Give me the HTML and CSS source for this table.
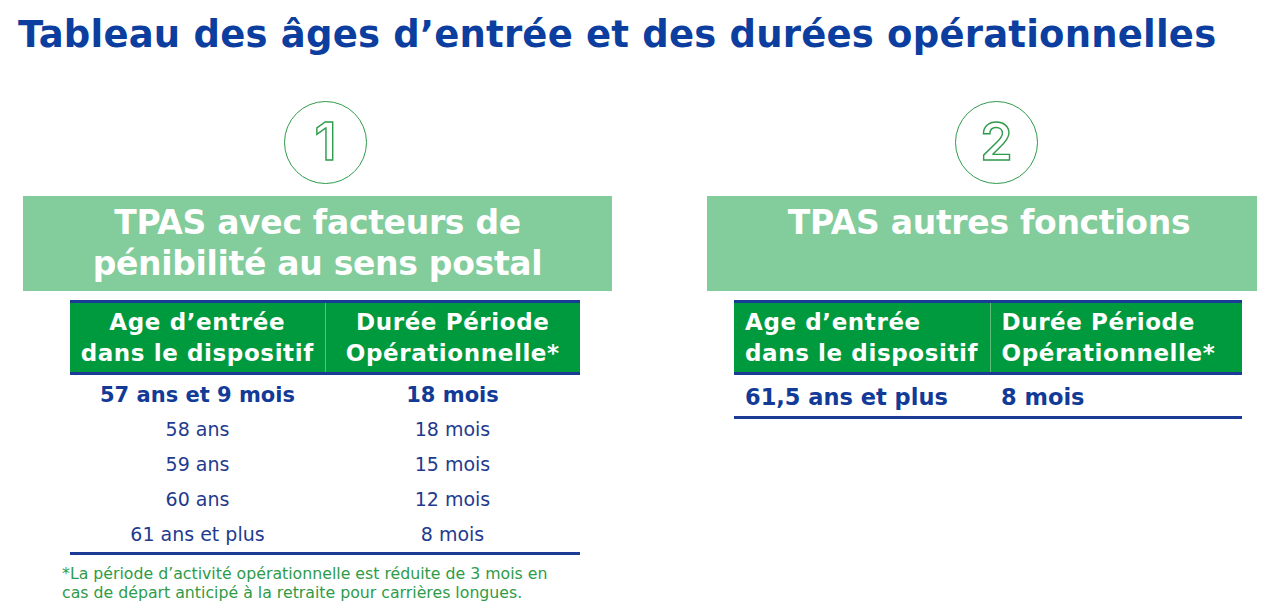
FILE: index.html
```html
<!DOCTYPE html>
<html lang="fr">
<head>
<meta charset="utf-8">
<title>Tableau des âges d’entrée</title>
<link rel="stylesheet" href="styles.css">
</head>
<body>
<h1 class="title">Tableau des âges d’entrée et des durées opérationnelles</h1>
<main class="cols">
  <section class="col col-left">
    <div class="badge-wrap badge-left"><div class="badge"><span class="badge-num">1</span></div></div>
    <div class="banner banner-left">TPAS avec facteurs de<br>pénibilité au sens postal</div>
    <table class="tbl tbl-left">
      <thead>
        <tr><th>Age d’entrée<br>dans le dispositif</th><th>Durée Période<br>Opérationnelle*</th></tr>
      </thead>
      <tbody>
        <tr class="strong"><td>57 ans et 9 mois</td><td>18 mois</td></tr>
        <tr><td>58 ans</td><td>18 mois</td></tr>
        <tr><td>59 ans</td><td>15 mois</td></tr>
        <tr><td>60 ans</td><td>12 mois</td></tr>
        <tr><td>61 ans et plus</td><td>8 mois</td></tr>
      </tbody>
    </table>
    <p class="note">*La période d’activité opérationnelle est réduite de 3 mois en<br>cas de départ anticipé à la retraite pour carrières longues.</p>
  </section>
  <section class="col col-right">
    <div class="badge-wrap badge-right"><div class="badge"><span class="badge-num">2</span></div></div>
    <div class="banner banner-right">TPAS autres fonctions</div>
    <table class="tbl tbl-right">
      <thead>
        <tr><th>Age d’entrée<br>dans le dispositif</th><th>Durée Période<br>Opérationnelle*</th></tr>
      </thead>
      <tbody>
        <tr class="strong"><td>61,5 ans et plus</td><td>8 mois</td></tr>
      </tbody>
    </table>
  </section>
</main>
</body>
</html>
```
FILE: styles.css
```css
* { box-sizing: border-box; }
html, body { margin: 0; padding: 0; background: #fff; }
body {
  width: 1288px;
  height: 610px;
  overflow: hidden;
  font-family: "DejaVu Sans", "Open Sans", sans-serif;
}
.title {
  margin: 0;
  padding: 14px 0 0 18px;
  font-size: 37px;
  line-height: 42px;
  font-weight: 700;
  color: #0b3e9f;
  letter-spacing: 0.2px;
  white-space: nowrap;
}
.cols {
  display: flex;
  padding-left: 23px;
  margin-top: 45px;
}
.col { display: flex; flex-direction: column; }
.col-left { width: 589px; }
.col-right { width: 550px; margin-left: 95px; }

.badge-wrap { display: flex; height: 95px; }
.badge-left { padding-left: 261px; }
.badge-right { padding-left: 248px; }
.badge {
  width: 83px;
  height: 83px;
  border: 1.5px solid #2f9b4c;
  border-radius: 50%;
  display: flex;
  align-items: center;
  justify-content: center;
}
.badge-num {
  font-family: "Inter", "Open Sans", sans-serif;
  font-size: 52px;
  line-height: 1;
  color: transparent;
  -webkit-text-stroke: 1.4px #2f9b4c;
  font-weight: 600;
  padding-bottom: 2px;
}
.banner {
  background: #83cc9c;
  color: #fff;
  font-weight: 700;
  height: 95px;
  text-align: center;
  font-size: 33px;
  line-height: 41px;
  padding-top: 6px;
  letter-spacing: -0.3px;
}
.banner-right { padding-left: 14px; }

.tbl {
  border-collapse: collapse;
  margin-top: 9px;
  border-top: 3px solid #1a3c97;
  border-bottom: 3px solid #1a3c97;
}
.tbl-left { width: 510px; margin-left: 47px; }
.tbl-right { width: 508px; margin-left: 27px; }
.tbl th {
  background: #009a3e;
  color: #fff;
  font-size: 23px;
  line-height: 31px;
  font-weight: 700;
  padding: 4px 0 3px;
  border-bottom: 3px solid #1a3c97;
  letter-spacing: 0.6px;
  white-space: nowrap;
}
.tbl th + th { border-left: 1px solid #5fbd7c; }
.tbl-left th { width: 50%; text-align: center; }
.tbl-right th { text-align: left; padding-left: 11px; }
.tbl-right th:first-child { width: 256px; }
.tbl td {
  color: #1f3b8e;
  font-size: 19px;
  line-height: 35px;
  padding: 0;
}
.tbl-left td { text-align: center; }
.tbl-right td { text-align: left; padding-left: 11px; }
.tbl tr.strong td {
  font-weight: 700;
  color: #123a97;
  font-size: 21px;
}
.tbl-left tr.strong td { line-height: 34px; padding-top: 3px; }
.tbl-right tr.strong td { font-size: 22.5px; line-height: 38px; padding-top: 3px; }

.note {
  margin: 9px 0 0 39px;
  font-size: 15.75px;
  line-height: 19px;
  color: #2e9b48;
}
```
